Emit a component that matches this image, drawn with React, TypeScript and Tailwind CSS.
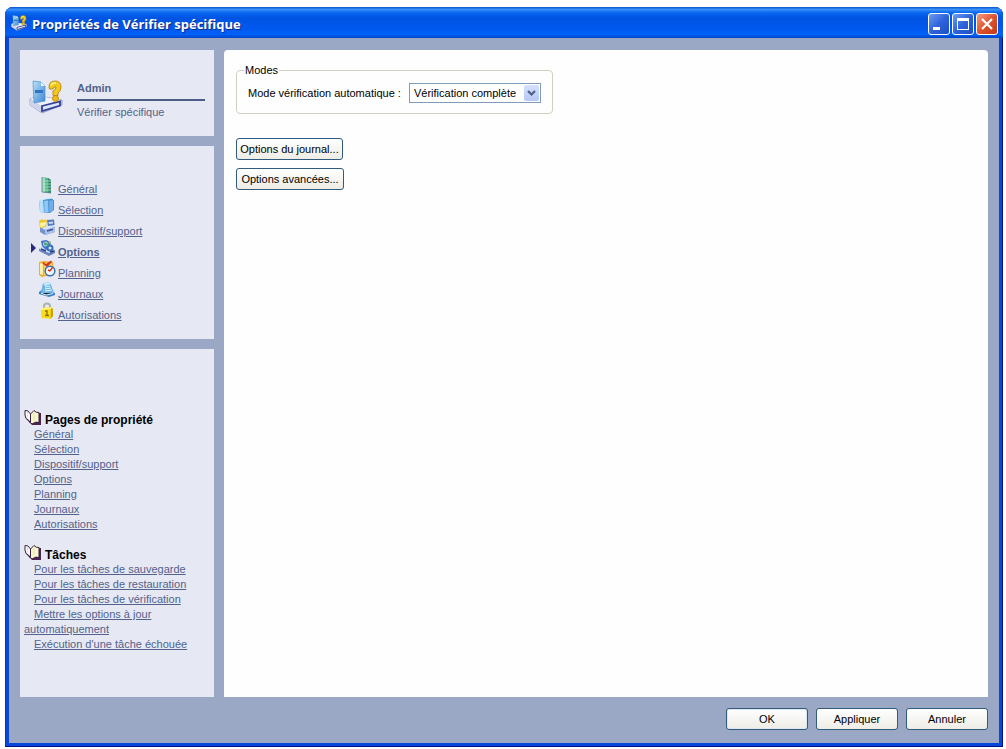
import type { ReactNode } from "react";

const DeviceIcon = ({ className }: { className: string }) => (
  <svg className={className} viewBox="0 0 34 34" aria-hidden="true">
    <defs>
      <linearGradient id="sheet" x1="0" y1="0" x2="1" y2="1">
        <stop offset="0" stopColor="#b9e2fb" />
        <stop offset="1" stopColor="#3d86d2" />
      </linearGradient>
    </defs>
    <path d="M1 19 L10 16 L33 20 L33 25 L13 33 L1 25 Z" fill="#b9bfde" stroke="#8b92bb" strokeWidth="0.8" />
    <path d="M1 19 L10 16 L33 20 L12 26 Z" fill="#eef0fa" />
    <path d="M1 20 L12 26 L13 33 L1 25 Z" fill="#cfd4ea" />
    <path d="M13 26 L31 21.500 L31 25.500 L13 31 Z" fill="#dfe5fb" stroke="#33449a" strokeWidth="1.800" />
    <path d="M4 1 L12 2 L16 6 L16 21 L5 23 Z" fill="url(#sheet)" stroke="#4a8fc8" strokeWidth="0.700" />
    <path d="M12 2 L12 6 L16 6 Z" fill="#e8f6ff" />
    <path d="M6 10 L14 10 L14 13 L6 13 Z" fill="#2f74bd" />
    <path d="M20 7 Q20 1 26 1 Q32 1 32 7 Q32 11 29 13 L29 15.500 L24 15.500 L24 11 Q27 10 27 7 L25 7 L24 9 L20.500 9 Z" fill="#f4c91c" stroke="#b98709" strokeWidth="0.900" />
    <path d="M22 5.500 Q23 2.500 27 3" fill="none" stroke="#fff2a0" strokeWidth="1.500" />
    <circle cx="26.500" cy="18.500" r="3" fill="#edba14" stroke="#b98709" strokeWidth="0.800" />
  </svg>
);

const Icon = ({ children }: { children: ReactNode }) => (
  <svg className="mb-[3px] h-[18px] w-[18px] shrink-0" viewBox="0 0 18 18" aria-hidden="true">
    {children}
  </svg>
);

const GeneralIcon = () => (
  <Icon>
    <path d="M4 1 L10 2 L13 4 L13 17 L4 16 Z" fill="#55b58b" />
    <path d="M4 1 L7 1.500 L7 16.300 L4 16 Z" fill="#9edcc0" />
    <path d="M10 2 L13 4 L13 17 L10.500 16.700 Z" fill="#348568" />
    <path d="M4 5 H13 M4 8 H13 M4 11 H13 M4 14 H13" stroke="#c5ecd8" strokeWidth="0.700" />
    <path d="M4 1 L4 16 L13 17" fill="none" stroke="#567b83" strokeWidth="0.800" />
  </Icon>
);

const SelectionIcon = () => (
  <Icon>
    <path d="M1 3 L14 1 L16 3 L16 13 L12 16 L2 15 Z" fill="#4a90d6" />
    <path d="M1 3 L5 2.500 L6 15 L2 15 Z" fill="#b8e0fa" />
    <path d="M6 4 L10 3.500 L10.500 15 L6.500 15 Z" fill="#8fc8f4" />
    <path d="M11 4 L15 3 L15 13 L11.500 15.500 Z" fill="#72aee8" />
    <path d="M1 3 L14 1 L16 3" fill="none" stroke="#d6eefc" />
  </Icon>
);

const DeviceSupportIcon = () => (
  <Icon>
    <path d="M2 9 L12 6 L17 9 L17 14 L7 17 L2 14 Z" fill="#7494ce" />
    <path d="M2 9 L12 6 L17 9 L7 12 Z" fill="#d7e3f7" />
    <path d="M7 12 L17 9 V14 L7 17 Z" fill="#a9bfe8" />
    <path d="M9 13 L15 11.300" stroke="#36529a" strokeWidth="1.500" />
    <path d="M9 2 L16 1.500 L16.500 7 L10 8 Z" fill="#5378c0" />
    <path d="M10.500 4 L15 3.500 V5.500 L11 6 Z" fill="#c8ddf8" />
    <path d="M1 3 L4 1 L5 2 L9 1.500 L8 9 L2 10 Z" fill="#efc633" />
    <path d="M2 5 L8 4 L7 8 L2.500 9 Z" fill="#fff4a4" />
  </Icon>
);

const OptionsIcon = () => (
  <Icon>
    <path d="M1 10 L6 7 L17 11 L17 14 L11 17 L1 12 Z" fill="#6581bf" />
    <path d="M1 10 L6 7 L17 11 L11 14 Z" fill="#d5e1f5" />
    <path d="M3 2 L8 1 L13 3 L12 8 L8 11 L4 7 Z" fill="#3f71c8" />
    <circle cx="7.500" cy="5" r="2.500" fill="#a9dcf5" />
    <circle cx="12" cy="9" r="3.500" fill="#3970be" />
    <circle cx="12" cy="9" r="1.500" fill="#dcecff" />
    <path d="M6 3 L11 5 L10 7 L6 6 Z" fill="#5ba878" />
    <path d="M3 10 L8 12 M12 13 L16 12" stroke="#273f88" strokeWidth="1.400" />
    <path d="M10 2 L13 3 L12 5 Z" fill="#d5ca45" />
  </Icon>
);

const PlanningIcon = () => (
  <Icon>
    <path d="M1 2 L6 1 L15 2 L16 14 L4 17 L1 15 Z" fill="#efac32" />
    <path d="M2 3 L5 4 L5 15 L2 14 Z" fill="#fff0a6" />
    <path d="M6 3 L14 3 L14 14 L6 15 Z" fill="#f9d376" />
    <path d="M5 2 L8 4 L13 0.500 L14 2 L9 7 L5 4 Z" fill="#d73524" />
    <circle cx="12" cy="11" r="4.800" fill="#f3faff" stroke="#3671ad" strokeWidth="1.500" />
    <path d="M12 11 L14.500 7.500 M12 11 L10 10" stroke="#d22d27" strokeWidth="1.400" />
  </Icon>
);

const JournalsIcon = () => (
  <Icon>
    <path d="M1 11 L5 8 L17 12 L17 14 L11 16 L1 13 Z" fill="#3c7fc4" />
    <path d="M5 2 L12 1 L16 12 L7 13 L3 11 Z" fill="#6eb5eb" />
    <path d="M5 2 L12 1 L13 3 L7 5 Z" fill="#c9e7fa" />
    <path d="M7 6 L12 5 M7 8 L13 7 M7 10 L14 9 M3 12 L8 14 L15 12.500" stroke="#eaf8ff" />
  </Icon>
);

const PermissionsIcon = () => (
  <Icon>
    <path d="M6 8 V4 Q6 1.500 9 1.500 Q12 1.500 12 4 V7" fill="none" stroke="#aeb1af" strokeWidth="2" />
    <path d="M3 6 L13 5 L15 7 V14 L12.500 17 L3.500 16 Z" fill="#f8de17" />
    <path d="M13 6 L15 7 V14 L12.500 17 Z" fill="#ce9f0c" />
    <path d="M3 6 L13 5.500 V7 L3 8 Z" fill="#fff58c" />
    <path d="M7 9 H9 V13.500 M7 13.500 H11" fill="none" stroke="#906b13" strokeWidth="1.300" />
  </Icon>
);

const BookIcon = () => (
  <svg className="h-[17px] w-[18px] shrink-0" viewBox="0 0 18 17" aria-hidden="true">
    <path d="M1 8 L4 12 L8 16 L17 16 V4 H15 V13 H9 L6 12 Z" fill="#4b2450" />
    <path d="M1 1.500 Q4 0.500 6.500 5 V14 Q5 10.500 2 9.500 L1 6 Z" fill="#fffefa" stroke="#38203c" />
    <path d="M6.500 5 L10 1.500 Q12 4 15 3.500 V13.500 Q12 12 8 15 L6.500 13.500 Z" fill="#faf6cf" stroke="#38203c" />
    <path d="M3.500 3 V8.500" stroke="#e5dce6" />
    <path d="M10 4 V11" stroke="#e6dfa9" />
  </svg>
);

const navigation = [
  { label: "Général", icon: GeneralIcon },
  { label: "Sélection", icon: SelectionIcon },
  { label: "Dispositif/support", icon: DeviceSupportIcon },
  { label: "Options", icon: OptionsIcon, active: true },
  { label: "Planning", icon: PlanningIcon },
  { label: "Journaux", icon: JournalsIcon },
  { label: "Autorisations", icon: PermissionsIcon },
];

const tasks = [
  "Pour les tâches de sauvegarde",
  "Pour les tâches de restauration",
  "Pour les tâches de vérification",
  "Mettre les options à jour automatiquement",
  "Exécution d'une tâche échouée",
];

const HelpSection = ({ title, links }: { title: string; links: string[] }) => (
  <section>
    <h2 className="flex h-[18px] items-start gap-[3px] text-[12px] leading-[23px] font-bold text-black">
      <BookIcon />
      {title}
    </h2>
    <ul className="leading-[15px]">
      {links.map((label) => (
        <li key={label} className="indent-[10px]">
          <a href="#" className="underline">{label}</a>
        </li>
      ))}
    </ul>
  </section>
);

const PushButton = ({ children, className }: { children: ReactNode; className: string }) => (
  <button
    type="button"
    className={`h-[22px] rounded-[3px] border border-[#315b7c] bg-linear-to-b from-white to-[#edece5] text-center leading-[18px] whitespace-nowrap text-black ${className}`}
  >
    {children}
  </button>
);

const captionButton =
  "flex size-[22px] items-center justify-center rounded-[3px] border border-white";

export default function App() {
  return (
    <div className="flex min-h-screen bg-white pt-[7px] pr-[3px] pb-0.5 pl-[5px] font-['Liberation_Sans',Arial,sans-serif] text-[11px]">
      <div className="flex grow flex-col rounded-t-lg bg-[#0847d8] px-1 pb-1 shadow-[inset_-1px_-1px_0_#00138c,inset_1px_0_0_#0831d9]">
        <header className="-mx-1 flex h-[31px] shrink-0 items-center rounded-t-lg bg-[linear-gradient(180deg,#0753c8_0%,#3b91fa_8%,#0869ef_18%,#0054e3_35%,#0058ee_70%,#0262f8_88%,#0044c5_100%)] pr-[5px] pl-[6px]">
          <DeviceIcon className="size-4 shrink-0" />
          <h1 className="ml-[5px] grow pt-0.5 font-['Open_Sans','Noto_Sans',sans-serif] text-[13px] leading-5 font-bold text-white [text-shadow:1px_1px_0_#0b2c85]">
            Propriétés de Vérifier spécifique
          </h1>
          <div className="flex gap-0.5 pt-[3px]">
            <button type="button" aria-label="Réduire" className={`${captionButton} bg-linear-to-br from-[#6f9bf2] via-[#2f63db] to-[#1a4fc4]`}>
              <svg className="size-5" viewBox="0 0 20 20"><path d="M4 13 H11 V16 H4 Z" fill="#fff" /></svg>
            </button>
            <button type="button" aria-label="Agrandir" className={`${captionButton} bg-linear-to-br from-[#6f9bf2] via-[#2f63db] to-[#1a4fc4]`}>
              <svg className="size-5" viewBox="0 0 20 20"><path d="M4 4 H16 V16 H4 Z M5 7 V15 H15 V7 Z" fill="#fff" fillRule="evenodd" /></svg>
            </button>
            <button type="button" aria-label="Fermer" className={`${captionButton} bg-linear-to-br from-[#f09a80] via-[#e0532c] to-[#c13a10]`}>
              <svg className="size-5" viewBox="0 0 20 20"><path d="M5 5 L15 15 M15 5 L5 15" stroke="#fff" strokeWidth="2.200" /></svg>
            </button>
          </div>
        </header>

        <div className="flex grow flex-col bg-[#9ba8c5] px-[11px] pt-3">
          <div className="flex grow gap-2.5">
            <aside className="flex w-[194px] shrink-0 flex-col gap-2.5 text-[#53628c]">
              <section className="flex h-[86px] items-start gap-[14px] bg-[#e6e9f3] px-[9px] pt-[30px]">
                <DeviceIcon className="size-[34px] shrink-0" />
                <div className="grow">
                  <h2 className="border-b-2 border-[#4c5d86] pb-[3px] text-[11px] leading-4 font-bold">Admin</h2>
                  <p className="pt-[3px] leading-4">Vérifier spécifique</p>
                </div>
              </section>

              <nav className="h-[193px] bg-[#e6e9f3] pt-[30px]">
                <ul>
                  {navigation.map(({ label, icon: NavIcon, active }) => (
                    <li key={label} className="flex h-[21px] items-end">
                      <span className="flex w-[18px] justify-end self-start pt-1">
                        {active && (
                          <svg className="mr-0.5 h-2.5 w-[5px]" viewBox="0 0 5 10"><path d="M0 0 L5 5 L0 10 Z" fill="#29297c" /></svg>
                        )}
                      </span>
                      <NavIcon />
                      <a href="#" className={`ml-0.5 leading-4 underline ${active ? "font-bold" : ""}`}>{label}</a>
                    </li>
                  ))}
                </ul>
              </nav>

              <section className="flex grow flex-col gap-3 bg-[#e6e9f3] px-1 pt-[60px]">
                <HelpSection title="Pages de propriété" links={navigation.map(({ label }) => label)} />
                <HelpSection title="Tâches" links={tasks} />
              </section>
            </aside>

            <main className="grow rounded-t-[4px] bg-[#fefefe] px-3 pt-3">
              <fieldset className="h-[52px] w-[317px] rounded-[4px] border border-[#d0d0bf] px-[11px]">
                <legend className="-ml-1 px-px leading-[17px]">Modes</legend>
                <div className="flex items-center gap-2 pt-1">
                  <label htmlFor="mode" className="grow whitespace-nowrap">Mode vérification automatique :</label>
                  <div className="relative">
                    <select id="mode" className="h-5 w-[132px] appearance-none border border-[#7f9db9] bg-white pl-1 leading-4">
                      <option>Vérification complète</option>
                    </select>
                    <span className="pointer-events-none absolute top-0.5 right-0.5 flex h-4 w-[15px] items-center justify-center rounded-[2px] bg-linear-to-b from-[#d5e1fd] to-[#b5c9f5]">
                      <svg className="h-[7px] w-[9px]" viewBox="0 0 9 7"><path d="M1 1 L4.500 4.500 L8 1" fill="none" stroke="#4d6185" strokeWidth="2.200" /></svg>
                    </span>
                  </div>
                </div>
              </fieldset>
              <div className="mt-6 flex flex-col items-start gap-2">
                <PushButton className="w-[107px]">Options du journal...</PushButton>
                <PushButton className="w-[108px]">Options avancées...</PushButton>
              </div>
            </main>
          </div>
          <footer className="flex h-[46px] items-start justify-end gap-2 pt-[11px]">
            <PushButton className="w-[82px] shadow-[inset_0_0_0_1px_#dfe6f2]">OK</PushButton>
            <PushButton className="w-[82px]">Appliquer</PushButton>
            <PushButton className="w-[82px]">Annuler</PushButton>
          </footer>
        </div>
      </div>
    </div>
  );
}
